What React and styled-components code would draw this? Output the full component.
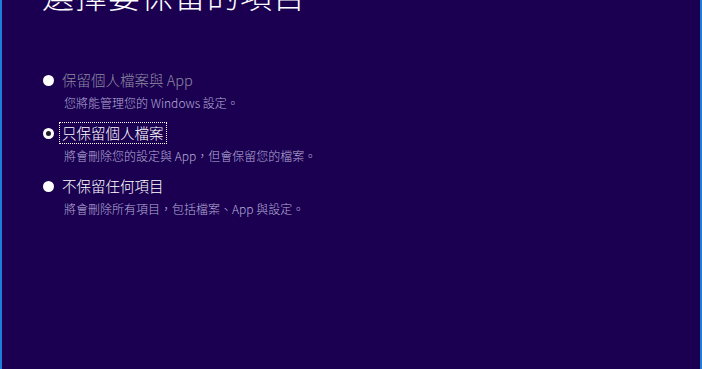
import React from "react";
import styled, { createGlobalStyle } from "styled-components";

const Global = createGlobalStyle`
  html, body { margin: 0; padding: 0; background: #1b0052; overflow: hidden; }
  * { box-sizing: border-box; }
`;

const Page = styled.div`
  width: 702px;
  height: 369px;
  background: #1b0052;
  border-left: 2px solid #1f7fd8;
  border-right: 2px solid #1f7fd8;
  padding-left: 40px;
  font-family: "Noto Sans CJK TC", "Noto Sans", sans-serif;
  overflow: hidden;
`;

const Title = styled.h1`
  margin: -26px 0 0 0;
  font-size: 32px;
  line-height: 40px;
  font-weight: 300;
  color: #ffffff;
  letter-spacing: 1px;
`;

const Options = styled.div`
  display: flex;
  flex-direction: column;
  gap: 8px;
  margin-top: 55px;
`;

const Option = styled.div`
  display: flex;
  flex-direction: column;
`;

const Row = styled.div`
  display: flex;
  align-items: center;
  gap: 6px;
  height: 22px;
`;

const Radio = styled.span`
  width: 11px;
  height: 11px;
  border-radius: 50%;
  background: ${(p) => (p.$checked ? "#1e1e2a" : "#ffffff")};
  border: ${(p) => (p.$checked ? "3px solid #ffffff" : "none")};
  flex: none;
  margin-left: 1px;
`;

const Label = styled.span`
  font-size: 14.5px;
  line-height: 18px;
  font-weight: 300;
  color: ${(p) => (p.$dim ? "#8e8aa0" : "#ffffff")};
  padding: 1px 2px;
  outline: ${(p) => (p.$focus ? "1px dotted #ffffff" : "none")};
  outline-offset: 0;
`;

const Desc = styled.div`
  font-size: 12px;
  line-height: 23px;
  font-weight: 300;
  color: #b4acd6;
  padding-left: 22px;
`;

export default function App() {
  return (
    <Page>
      <Global />
      <Title>選擇要保留的項目</Title>
      <Options>
        <Option>
          <Row>
            <Radio />
            <Label $dim>保留個人檔案與 App</Label>
          </Row>
          <Desc>您將能管理您的 Windows 設定。</Desc>
        </Option>
        <Option>
          <Row>
            <Radio $checked />
            <Label $focus>只保留個人檔案</Label>
          </Row>
          <Desc>將會刪除您的設定與 App，但會保留您的檔案。</Desc>
        </Option>
        <Option>
          <Row>
            <Radio />
            <Label>不保留任何項目</Label>
          </Row>
          <Desc>將會刪除所有項目，包括檔案、App 與設定。</Desc>
        </Option>
      </Options>
    </Page>
  );
}
